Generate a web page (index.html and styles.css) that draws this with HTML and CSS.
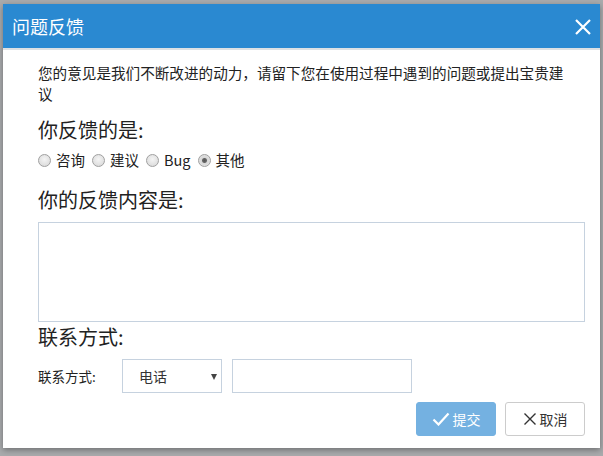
FILE: index.html
```html
<!DOCTYPE html>
<html lang="zh">
<head>
<meta charset="utf-8">
<title>问题反馈</title>
<link rel="stylesheet" href="styles.css">
</head>
<body>
<div class="dialog">
  <div class="dlg-head">
    <span class="dlg-title">问题反馈</span>
    <svg class="dlg-close" width="16" height="16" viewBox="0 0 16 16"><path d="M1 1L15 15M15 1L1 15" stroke="#fff" stroke-width="2.2" fill="none"/></svg>
  </div>
  <div class="dlg-body">
    <p class="intro">您的意见是我们不断改进的动力，请留下您在使用过程中遇到的问题或提出宝贵建议</p>
    <h4 class="sec">你反馈的是:</h4>
    <div class="radios">
      <label class="rad"><input type="radio" name="t"> 咨询</label>
      <label class="rad"><input type="radio" name="t"> 建议</label>
      <label class="rad"><input type="radio" name="t"> Bug</label>
      <label class="rad"><input type="radio" name="t" checked> 其他</label>
    </div>
    <h4 class="sec sec2">你的反馈内容是:</h4>
    <textarea class="content"></textarea>
    <h4 class="sec sec3">联系方式:</h4>
    <div class="contact">
      <span class="clabel">联系方式:</span>
      <div class="selwrap">
        <select class="sel"><option>电话</option><option>邮箱</option><option>QQ</option></select>
      </div>
      <input class="cinput" type="text">
    </div>
    <div class="actions">
      <button class="btn btn-ok"><svg width="18" height="14" viewBox="0 0 18 14"><path d="M1.5 7.5L6.5 12.5L16.5 1.5" stroke="#fff" stroke-width="2.2" fill="none"/></svg>提交</button>
      <button class="btn btn-cancel"><svg width="14" height="14" viewBox="0 0 14 14"><path d="M1.5 1.5L12.5 12.5M12.5 1.5L1.5 12.5" stroke="#333" stroke-width="1.4" fill="none"/></svg>取消</button>
    </div>
  </div>
</div>
</body>
</html>
```

FILE: styles.css
```css
html, body {
  margin: 0;
  padding: 0;
}
body {
  width: 603px;
  height: 456px;
  background: #a9abad;
  padding: 4px 3px 0 3px;
  box-sizing: border-box;
  font-family: "Noto Sans CJK SC", "Noto Sans", sans-serif;
  color: #333;
  overflow: hidden;
}
.dialog {
  width: 597px;
  height: 444px;
  background: #fff;
  box-shadow: 0 2px 6px rgba(0,0,0,0.35);
  display: flex;
  flex-direction: column;
}
.dlg-head {
  height: 44px;
  background: #2a89d1;
  border-bottom: 2px solid #dde1e4;
  display: flex;
  align-items: center;
  justify-content: space-between;
  padding: 0 9px 0 9px;
}
.dlg-title {
  color: #fff;
  font-size: 18px;
  line-height: 24px;
}
.dlg-close {
  display: block;
  margin-top: 1px;
}
.dlg-body {
  padding: 12px 15px 0 35px;
}
.intro {
  margin: 0;
  width: 532px;
  font-size: 14.6px;
  line-height: 21px;
  color: #222;
}
.sec {
  margin: 12px 0 0 0;
  font-size: 20px;
  font-weight: normal;
  line-height: 28px;
  color: #222;
}
.radios {
  display: flex;
  align-items: center;
  margin-top: 6px;
  font-size: 14.5px;
  line-height: 20px;
  color: #222;
}
.rad {
  display: flex;
  align-items: center;
  margin-right: 7px;
}
.rad input {
  appearance: none;
  -webkit-appearance: none;
  width: 13px;
  height: 13px;
  margin: 0 5px 0 0;
  border: 1px solid #a0a0a0;
  border-radius: 50%;
  background: radial-gradient(circle at 50% 40%, #f4f4f4 0%, #d6d6d6 100%);
  box-sizing: border-box;
}
.rad input:checked {
  background: radial-gradient(circle, #555 0, #666 2px, #d8d8d8 3px, #e8e8e8 100%);
}
.sec2 {
  margin-top: 16px;
}
.content {
  display: block;
  width: 547px;
  height: 100px;
  margin: 8px 0 0 0;
  box-sizing: border-box;
  border: 1px solid #c6d2df;
  resize: none;
  outline: none;
}
.sec3 {
  margin-top: 1px;
}
.contact {
  display: flex;
  align-items: center;
  margin-top: 8px;
}
.clabel {
  font-size: 13.5px;
  color: #222;
  width: 84px;
}
.selwrap {
  position: relative;
  width: 100px;
  height: 34px;
}
.selwrap::after {
  content: "";
  position: absolute;
  right: 5px;
  top: 15px;
  border-left: 3.5px solid transparent;
  border-right: 3.5px solid transparent;
  border-top: 6px solid #444;
}
.sel {
  appearance: none;
  -webkit-appearance: none;
  width: 100px;
  height: 34px;
  border: 1px solid #c6d2df;
  background: #fff;
  font-family: inherit;
  font-size: 14px;
  color: #333;
  padding: 0 0 0 16px;
  border-radius: 0;
  outline: none;
}
.cinput {
  width: 180px;
  height: 34px;
  margin-left: 10px;
  box-sizing: border-box;
  border: 1px solid #c6d2df;
  outline: none;
}
.actions {
  display: flex;
  justify-content: flex-end;
  gap: 9px;
  margin-top: 9px;
}
.btn {
  width: 80px;
  height: 34px;
  border-radius: 3px;
  display: flex;
  align-items: center;
  justify-content: center;
  gap: 3px;
  font-family: inherit;
  font-size: 14px;
  padding: 0;
}
.btn-ok {
  background: #74b1e1;
  border: 1px solid #74b1e1;
  color: #fff;
}
.btn-cancel {
  background: #fff;
  border: 1px solid #ccc;
  color: #333;
}
```
